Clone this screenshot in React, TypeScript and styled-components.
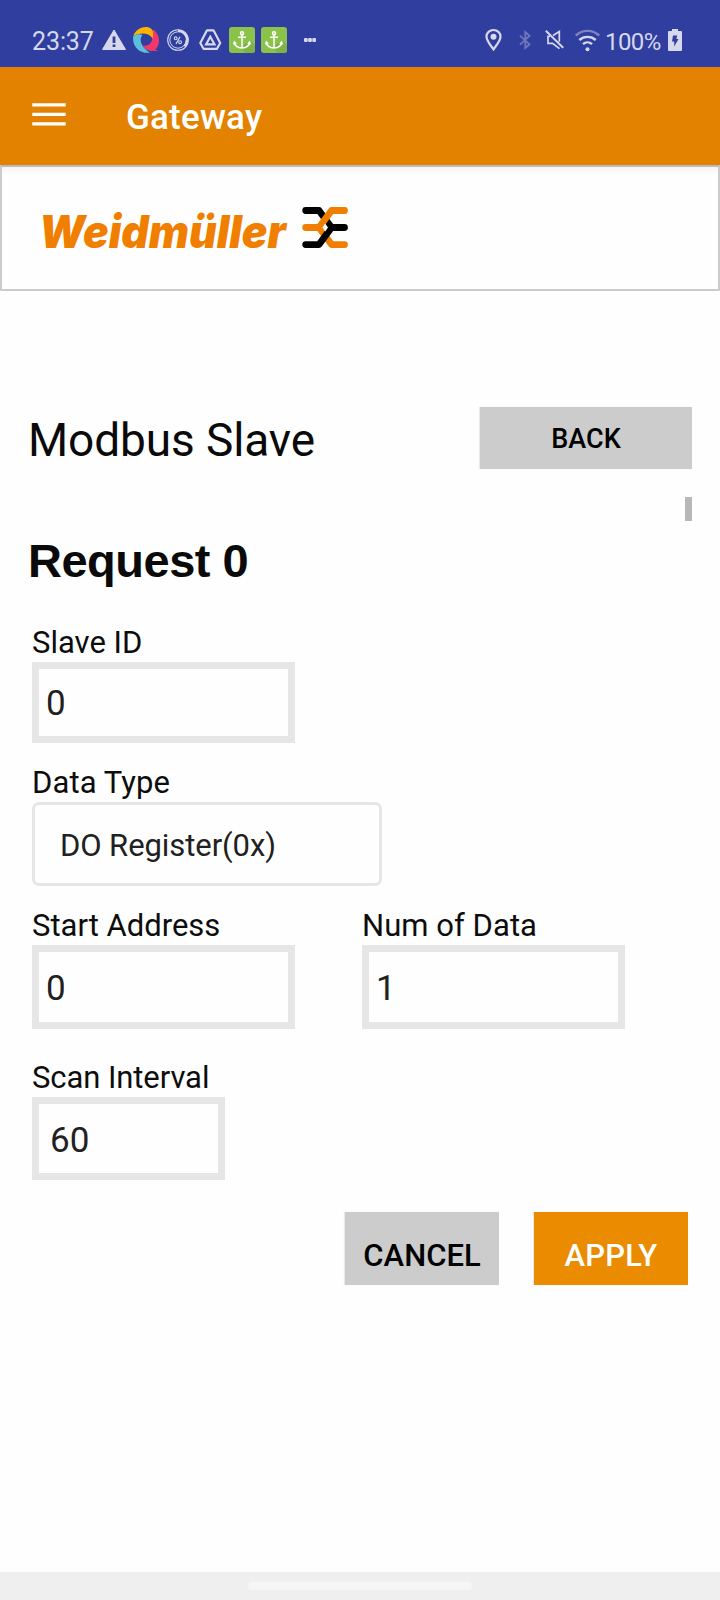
import React from "react";
import styled, { createGlobalStyle } from "styled-components";

const GlobalStyle = createGlobalStyle`
  * { box-sizing: border-box; }
  body { margin: 0; background: #fefefe; font-family: Roboto, "Liberation Sans", sans-serif; }
  button { font-family: inherit; border: 0; padding: 0; }
`;

const Screen = styled.div`
  width: 720px;
  height: 1600px;
  display: flex;
  flex-direction: column;
  background: #fefefe;
  overflow: hidden;
`;

const StatusBar = styled.header`
  height: 67px;
  flex: none;
  display: flex;
  align-items: flex-start;
  justify-content: space-between;
  padding: 27px 38px 0 32px;
  background: #303e9f;
  color: #d6d8ec;
`;

const StatusGroup = styled.div`
  display: flex;
  align-items: center;
  height: 26px;
`;

const Clock = styled.span`
  width: 70px;
  font-size: 25px;
  line-height: 28px;
  padding-top: 3px;
  letter-spacing: -0.1px;
`;

const Percent = styled.span`
  width: 63px;
  font-size: 24px;
  line-height: 28px;
  padding-top: 3px;
  letter-spacing: -0.6px;
`;

const StatusIcon = styled.svg<{ $gap?: number }>`
  display: block;
  flex: none;
  margin-right: ${(p) => p.$gap ?? 6}px;
`;

const AppBar = styled.div`
  height: 98px;
  flex: none;
  display: flex;
  align-items: center;
  padding: 0 32px;
  background: #e28200;
`;

const MenuButton = styled.button`
  width: 34px;
  height: 23px;
  margin: 0 60px 4px 0;
  background: none;
`;

const MenuIcon = styled.svg`
  display: block;
`;

const AppTitle = styled.h1`
  margin: 3px 0 0;
  color: #fff;
  font-size: 35px;
  line-height: 42px;
  font-weight: 500;
  letter-spacing: 0.2px;
`;

const LogoPanel = styled.section`
  height: 126px;
  flex: none;
  border: 2px solid #ccc;
  border-top-color: #bbb;
  padding: 34px 0 0 31px;
  background: linear-gradient(#f5f5f5, #fefefe 8px);
`;

const LogoMark = styled.svg`
  display: block;
  overflow: visible;
`;

const Main = styled.main`
  flex: 1;
  display: flex;
  flex-direction: column;
  padding: 116px 28px 0;
`;

const TitleRow = styled.div`
  height: 62px;
  display: flex;
  justify-content: space-between;
`;

const PageTitle = styled.h2`
  margin: 0;
  padding-top: 6px;
  font-size: 46px;
  line-height: 54px;
  font-weight: 400;
  letter-spacing: -0.1px;
  color: #0a0a0a;
`;

const Button = styled.button<{ $primary?: boolean; $size?: "wide" | "normal" }>`
  width: ${(p) => (p.$size === "wide" ? 212 : 154)}px;
  height: ${(p) => (p.$size === "wide" ? 62 : 73)}px;
  padding-top: ${(p) => (p.$size === "wide" ? 2 : 14)}px;
  font-size: ${(p) => (p.$size === "wide" ? 27 : 31)}px;
  font-weight: 500;
  letter-spacing: ${(p) => (p.$primary ? 0.2 : 0)}px;
  color: ${(p) => (p.$primary ? "#fff" : "#000")};
  background: ${(p) => (p.$primary ? "#eb8c00" : "#ccc")};
  box-shadow: -1px 0 1px rgba(0, 0, 0, 0.08);
`;

const RequestRow = styled.div`
  height: 127px;
  margin-top: 28px;
  display: flex;
  justify-content: space-between;
`;

const RequestTitle = styled.h3`
  margin: 36px 0 0;
  font-family: "Liberation Sans", Arial, sans-serif;
  font-size: 47px;
  line-height: 56px;
  font-weight: 700;
  letter-spacing: -0.5px;
  color: #0a0a0a;
`;

const ScrollThumb = styled.div`
  width: 7px;
  height: 24px;
  background: #b8b8b8;
`;

const Form = styled.form`
  display: flex;
  flex-direction: column;
  padding: 0 4px;
`;

const FieldRow = styled.div<{ $after: number }>`
  display: flex;
  gap: 67px;
  margin-bottom: ${(p) => p.$after}px;
`;

const Field = styled.div`
  display: flex;
  flex-direction: column;
`;

const Label = styled.label<{ $tracking?: number }>`
  font-size: 31px;
  line-height: 38px;
  letter-spacing: ${(p) => p.$tracking ?? 0}px;
  color: #0d0d0d;
  white-space: nowrap;
`;

const ValueBox = styled.div<{ $width?: number; $height: number; $indent?: number; $drop?: number }>`
  width: ${(p) => p.$width ?? 263}px;
  height: ${(p) => p.$height}px;
  border: 7px solid #e6e6e6;
  padding: ${(p) => p.$drop ?? 2}px 0 0 ${(p) => p.$indent ?? 7}px;
  display: flex;
  align-items: center;
  font-size: 35px;
  line-height: 40px;
  color: #212121;
  background: #fefefe;
`;

const SelectBox = styled.div`
  width: 350px;
  height: 84px;
  border: 3px solid #e6e6e6;
  border-radius: 7px;
  padding: 2px 0 0 25px;
  display: flex;
  align-items: center;
  font-size: 31px;
  letter-spacing: -0.08px;
  color: #212121;
  background: #fefefe;
`;

const Actions = styled.div`
  display: flex;
  justify-content: flex-end;
  gap: 35px;
`;

const NavBar = styled.footer`
  height: 28px;
  flex: none;
  display: flex;
  justify-content: center;
  align-items: flex-start;
  padding-top: 10px;
  background: #efefef;
`;

const NavPill = styled.div`
  width: 224px;
  height: 8px;
  border-radius: 4px;
  background: #f6f6f6;
`;

const INK = "#d6d8ec";

const AnchorIcon = ({ gap }: { gap: number }) => (
  <StatusIcon $gap={gap} width="26" height="26" viewBox="0 0 26 26">
    <rect width="26" height="26" rx="3" fill="#8bc34a" />
    <path d="M21 13 L26 18 V23 Q26 26 23 26 H17 L11 21 Z" fill="#7cb342" />
    <g fill="none" stroke="#fff" strokeWidth="1.5">
      <circle cx="13" cy="6.3" r="1.5" />
      <path d="M13 8 V21 M9 10.3 H17 M5 15.5 C6 19.5 9 20.8 13 21 C17 20.8 20 19.5 21 15.5" />
    </g>
    <path d="M4 17.5 L5 13.5 L8 16.4 Z M22 17.5 L21 13.5 L18 16.4 Z" fill="#fff" />
  </StatusIcon>
);

const Logo = () => (
  <LogoMark width="340" height="76" viewBox="33 201 340 76" role="img" aria-label="Weidmüller">
    <text
      x="39"
      y="247.8"
      textLength="247"
      lengthAdjust="spacingAndGlyphs"
      fontFamily="Inter, sans-serif"
      fontSize="45"
      fontWeight="900"
      fontStyle="italic"
      fill="#f07f00"
    >
      Weidmüller
    </text>
    <g fill="none" strokeWidth="6.8" strokeLinecap="round" strokeLinejoin="round">
      <path d="M305.7 210.5 H319 L331.5 227.5" stroke="#000" />
      <path d="M305.7 227.5 H319 L331.5 210.5 H344.5" stroke="#f07f00" />
      <path d="M319 227.5 L331.5 244.6 H344.5" stroke="#f07f00" />
      <path d="M344.5 227.5 H331.5 L319 244.6 H305.7" stroke="#000" />
    </g>
    <path d="M325.2 223.6 L328 227.5 L325.2 231.4 L322.4 227.5 Z" fill="#fefefe" />
  </LogoMark>
);

export default function App() {
  return (
    <>
      <GlobalStyle />
      <Screen>
        <StatusBar>
          <StatusGroup>
            <Clock>23:37</Clock>
            <StatusIcon $gap={7} width="24" height="26" viewBox="0 0 24 26">
              <path d="M12 3 L23.5 22.5 H0.5 Z" fill={INK} stroke={INK} strokeLinejoin="round" />
              <path d="M12 9.5 V16 M12 17.5 V20" stroke="#303e9f" strokeWidth="2.8" />
            </StatusIcon>
            <StatusIcon $gap={8} width="26" height="26" viewBox="0 0 26 26">
              <path d="M0.3 9 C3 2 10 -1 16 0.5 C20 2 21.5 6 20 12 C16 6 9 5 0.3 9 Z" fill="#ffb300" />
              <path d="M0.3 9 C4 6.8 7 6.8 9.5 8 C5.5 12 8 20 17 25.5 C8 27.5 -1.5 20 0.3 9 Z" fill="#5bbfdc" />
              <path d="M20 2.3 C27 7 28 17 22.5 22.5 C18 26 13 23 9.3 18.5 C17 20 21 14 20 2.3 Z" fill="#f0386b" />
              <path d="M22 22.5 L25.5 24 H20 Z" fill="#f0386b" />
            </StatusIcon>
            <StatusIcon $gap={9} width="23" height="26" viewBox="0 0 23 26">
              <circle cx="11" cy="13" r="10.3" fill="none" stroke={INK} strokeWidth="1.1" />
              <path d="M11 4.8 A8.2 8.2 0 1 0 19.2 13" fill="none" stroke={INK} strokeWidth="1" />
              <path d="M11 4 A9 9 0 0 1 17.5 19.3" fill="none" stroke={INK} strokeWidth="2.4" />
              <circle cx="8.7" cy="11.3" r="1.4" fill="none" stroke={INK} strokeWidth="1.1" />
              <circle cx="13.1" cy="15.2" r="1.4" fill="none" stroke={INK} strokeWidth="1.1" />
              <path d="M13 9.8 L9 17" stroke={INK} strokeWidth="1.2" />
            </StatusIcon>
            <StatusIcon $gap={7} width="23" height="26" viewBox="0 0 23 26">
              <path
                d="M8 3.3 H14.5 L21.2 16 L18 21.8 H4.5 L1.3 16 Z"
                fill="none"
                stroke={INK}
                strokeWidth="2.2"
                strokeLinejoin="round"
              />
              <path d="M11.3 9.7 L15.5 17.3 H7.1 Z" fill="none" stroke={INK} strokeWidth="2.2" />
            </StatusIcon>
            <AnchorIcon gap={6} />
            <AnchorIcon gap={17} />
            <StatusIcon $gap={0} width="12" height="26" viewBox="0 0 12 26">
              <g fill={INK}>
                <rect x="0" y="11" width="3.7" height="4" rx="1" />
                <rect x="4.1" y="11" width="3.8" height="4" rx="1" />
                <rect x="8.3" y="11" width="3.7" height="4" rx="1" />
              </g>
            </StatusIcon>
          </StatusGroup>

          <StatusGroup>
            <StatusIcon $gap={17} width="17" height="26" viewBox="0 0 17 26">
              <path
                d="M8.5 3 C4.6 3 1.5 5.8 1.5 9.7 C1.5 13.7 5.5 18 8.5 22.4 C11.5 18 15.5 13.7 15.5 9.7 C15.5 5.8 12.4 3 8.5 3 Z"
                fill="none"
                stroke={INK}
                strokeWidth="2.2"
              />
              <circle cx="8.5" cy="9.7" r="3" fill={INK} />
            </StatusIcon>
            <StatusIcon $gap={13} width="13" height="26" viewBox="0 0 13 26">
              <path
                d="M1 8.6 L10.5 17.4 L6.3 21 V5 L10.5 8.8 L1 17.6"
                fill="none"
                stroke="#7078bb"
                strokeWidth="1.8"
              />
            </StatusIcon>
            <StatusIcon $gap={11} width="19" height="26" viewBox="0 0 19 26">
              <path
                d="M5 9.3 H3 V16.3 H7.5 L14.5 21.6 M8 8.5 L14.3 4.6 V14.8"
                fill="none"
                stroke={INK}
                strokeWidth="1.7"
              />
              <path d="M0.8 3.7 L18.2 20.8" stroke={INK} strokeWidth="1.9" />
            </StatusIcon>
            <StatusIcon $gap={5} width="25" height="26" viewBox="0 0 25 26">
              <g fill="none" strokeWidth="2.4">
                <path d="M0.8 8.5 C7.5 2.3 17.5 2.3 24.2 8.5" stroke="#7c84c1" />
                <path d="M4.3 13 C9 8.8 16 8.8 20.7 13" stroke={INK} />
                <path d="M8 17.2 C10.6 14.7 14.4 14.7 17 17.2" stroke={INK} />
              </g>
              <circle cx="12.5" cy="22.3" r="2" fill={INK} />
            </StatusIcon>
            <Percent>100%</Percent>
            <StatusIcon $gap={0} width="14" height="26" viewBox="0 0 14 26">
              <path d="M4 2 H10 V4 H13 Q14 4 14 5 V23 Q14 24 13 24 H1 Q0 24 0 23 V5 Q0 4 1 4 H4 Z" fill={INK} />
              <path d="M5 8.5 H9.3 L8.3 12 H10.5 L6.2 19.5 V14.5 H4 Z" fill="#303e9f" />
            </StatusIcon>
          </StatusGroup>
        </StatusBar>

        <AppBar>
          <MenuButton aria-label="Menu">
            <MenuIcon width="34" height="23" viewBox="0 0 34 23">
              <path d="M0.3 1.8 H33.7 M0.3 11.3 H33.7 M0.3 20.9 H33.7" stroke="#fff" strokeWidth="3.3" />
            </MenuIcon>
          </MenuButton>
          <AppTitle>Gateway</AppTitle>
        </AppBar>

        <LogoPanel>
          <Logo />
        </LogoPanel>

        <Main>
          <TitleRow>
            <PageTitle>Modbus Slave</PageTitle>
            <Button $size="wide">BACK</Button>
          </TitleRow>

          <RequestRow>
            <RequestTitle>Request 0</RequestTitle>
            <ScrollThumb />
          </RequestRow>

          <Form>
            <FieldRow $after={21}>
              <Field>
                <Label>Slave ID</Label>
                <ValueBox $height={81}>0</ValueBox>
              </Field>
            </FieldRow>
            <FieldRow $after={21}>
              <Field>
                <Label $tracking={0.1}>Data Type</Label>
                <SelectBox>DO Register(0x)</SelectBox>
              </Field>
            </FieldRow>
            <FieldRow $after={30}>
              <Field>
                <Label>Start Address</Label>
                <ValueBox $height={84} $drop={4}>0</ValueBox>
              </Field>
              <Field>
                <Label $tracking={0.05}>Num of Data</Label>
                <ValueBox $height={84} $drop={4}>1</ValueBox>
              </Field>
            </FieldRow>
            <FieldRow $after={32}>
              <Field>
                <Label $tracking={-0.08}>Scan Interval</Label>
                <ValueBox $width={193} $height={83} $indent={11} $drop={4}>60</ValueBox>
              </Field>
            </FieldRow>
            <Actions>
              <Button type="button">CANCEL</Button>
              <Button type="button" $primary>APPLY</Button>
            </Actions>
          </Form>
        </Main>

        <NavBar>
          <NavPill />
        </NavBar>
      </Screen>
    </>
  );
}
